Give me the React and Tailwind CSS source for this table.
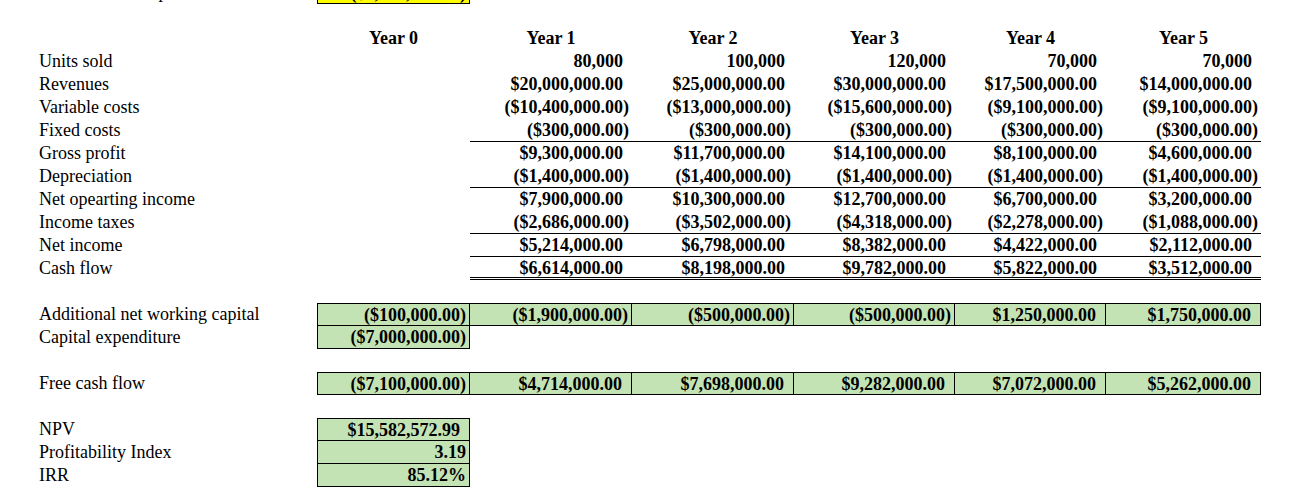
import React from 'react';

const colWidths = ['w-[153px]', 'w-[162px]', 'w-[162px]', 'w-[161px]', 'w-[151px]', 'w-[155px]'];

// accounting style: positives keep room for the closing paren
const Num = ({ v }) => (
  <span>
    {v}
    {!v.endsWith(')') && !v.endsWith('%') && !/^\d+\.\d+$/.test(v) && <span className="invisible">)</span>}
  </span>
);

const Cell = ({ i, v, className = '' }) => (
  <div className={`${colWidths[i]} shrink-0 h-full text-right pr-[3px] font-bold whitespace-nowrap ${className}`}>
    {v ? <Num v={v} /> : null}
  </div>
);

const Row = ({ label, children }) => (
  <div className="flex h-[23px]">
    <div className="w-[278px] shrink-0 whitespace-nowrap">{label}</div>
    {children}
  </div>
);

const income = [
  { label: 'Units sold', vals: ['80,000', '100,000', '120,000', '70,000', '70,000'] },
  { label: 'Revenues', vals: ['$20,000,000.00', '$25,000,000.00', '$30,000,000.00', '$17,500,000.00', '$14,000,000.00'] },
  { label: 'Variable costs', vals: ['($10,400,000.00)', '($13,000,000.00)', '($15,600,000.00)', '($9,100,000.00)', '($9,100,000.00)'] },
  { label: 'Fixed costs', vals: ['($300,000.00)', '($300,000.00)', '($300,000.00)', '($300,000.00)', '($300,000.00)'], line: 'border-b border-black' },
  { label: 'Gross profit', vals: ['$9,300,000.00', '$11,700,000.00', '$14,100,000.00', '$8,100,000.00', '$4,600,000.00'] },
  { label: 'Depreciation', vals: ['($1,400,000.00)', '($1,400,000.00)', '($1,400,000.00)', '($1,400,000.00)', '($1,400,000.00)'], line: 'border-b border-black' },
  { label: 'Net opearting income', vals: ['$7,900,000.00', '$10,300,000.00', '$12,700,000.00', '$6,700,000.00', '$3,200,000.00'] },
  { label: 'Income taxes', vals: ['($2,686,000.00)', '($3,502,000.00)', '($4,318,000.00)', '($2,278,000.00)', '($1,088,000.00)'], line: 'border-b border-black' },
  { label: 'Net income', vals: ['$5,214,000.00', '$6,798,000.00', '$8,382,000.00', '$4,422,000.00', '$2,112,000.00'], line: 'border-b border-black' },
  { label: 'Cash flow', vals: ['$6,614,000.00', '$8,198,000.00', '$9,782,000.00', '$5,822,000.00', '$3,512,000.00'], line: 'border-b-[3px] border-double border-black' },
];

const nwc = ['($100,000.00)', '($1,900,000.00)', '($500,000.00)', '($500,000.00)', '$1,250,000.00', '$1,750,000.00'];
const fcf = ['($7,100,000.00)', '$4,714,000.00', '$7,698,000.00', '$9,282,000.00', '$7,072,000.00', '$5,262,000.00'];

const green = 'bg-[#c4e3b4]';

export default function App() {
  return (
    <div className="bg-white min-h-[498px] overflow-hidden font-['Liberation_Serif',serif] text-[18px] leading-[23px] text-black">
      <div className="-mt-[19.5px] pl-[39px]">
        {/* row cut off at the top */}
        <Row label="New fixed asset purchase">
          <Cell i={0} v="($7,000,000.00)" className="bg-[#ffff00] border border-black" />
        </Row>
        <Row label="" />

        <Row label="">
          {[0, 1, 2, 3, 4, 5].map(i => (
            <div key={i} className={`${colWidths[i]} shrink-0 text-center font-bold`}>Year {i}</div>
          ))}
        </Row>

        {income.map(r => (
          <Row key={r.label} label={r.label}>
            <Cell i={0} />
            {r.vals.map((v, j) => (
              <Cell key={j} i={j + 1} v={v} className={r.line || ''} />
            ))}
          </Row>
        ))}

        <Row label="" />
        <Row label="Additional net working capital">
          {nwc.map((v, i) => (
            <Cell key={i} i={i} v={v} className={`${green} border-y border-r border-black ${i === 0 ? 'border-l' : ''}`} />
          ))}
        </Row>
        <Row label="Capital expenditure">
          <Cell i={0} v="($7,000,000.00)" className={`${green} border-x border-b border-black`} />
        </Row>

        <Row label="" />
        <Row label="Free cash flow">
          {fcf.map((v, i) => (
            <Cell key={i} i={i} v={v} className={`${green} border-y border-r border-black ${i === 0 ? 'border-l' : ''}`} />
          ))}
        </Row>

        <Row label="" />
        <Row label="NPV">
          <Cell i={0} v="$15,582,572.99" className={`${green} border border-black`} />
        </Row>
        <Row label="Profitability Index">
          <Cell i={0} v="3.19" className={`${green} border-x border-b border-black`} />
        </Row>
        <Row label="IRR">
          <Cell i={0} v="85.12%" className={`${green} border-x border-b border-black`} />
        </Row>
      </div>
    </div>
  );
}
